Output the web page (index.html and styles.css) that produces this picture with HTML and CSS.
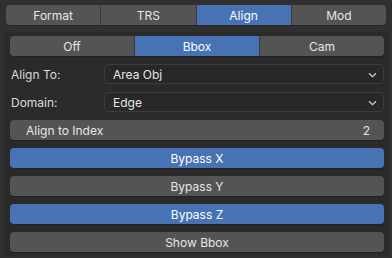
FILE: index.html
```html
<!DOCTYPE html>
<html lang="en">
<head>
    <meta charset="UTF-8">
    <title>Align Panel</title>
    <link rel="stylesheet" href="styles.css">
</head>
<body>
    <div class="tabs">
        <div class="tab">Format</div>
        <div class="tab">TRS</div>
        <div class="tab active">Align</div>
        <div class="tab">Mod</div>
    </div>
    <div class="panel">
        <div class="seg">
            <div class="seg-item">Off</div>
            <div class="seg-item active">Bbox</div>
            <div class="seg-item">Cam</div>
        </div>
        <div class="field">
            <label>Align To:</label>
            <div class="select">
                <span>Area Obj</span>
                <svg class="chev" width="9" height="6" viewBox="0 0 9 6"><path d="M1 1.2 L4.5 4.6 L8 1.2" fill="none" stroke="#cfcfcf" stroke-width="1.3"/></svg>
            </div>
        </div>
        <div class="field">
            <label>Domain:</label>
            <div class="select">
                <span>Edge</span>
                <svg class="chev" width="9" height="6" viewBox="0 0 9 6"><path d="M1 1.2 L4.5 4.6 L8 1.2" fill="none" stroke="#cfcfcf" stroke-width="1.3"/></svg>
            </div>
        </div>
        <div class="btn number">
            <span>Align to Index</span>
            <span>2</span>
        </div>
        <div class="btn active">Bypass X</div>
        <div class="btn">Bypass Y</div>
        <div class="btn active">Bypass Z</div>
        <div class="btn">Show Bbox</div>
    </div>
</body>
</html>
```
FILE: styles.css
```css
html, body {
    margin: 0;
    padding: 0;
}
body {
    width: 392px;
    height: 258px;
    background: #303030;
    font-family: Inter, "Noto Sans", sans-serif;
    font-size: 12px;
    color: #e6e6e6;
    overflow: hidden;
}
.tabs {
    display: flex;
    margin: 5px 6px 0 6px;
    height: 20px;
}
.tab {
    flex: 1;
    display: flex;
    align-items: center;
    justify-content: center;
    background: #545454;
    border-right: 1px solid #3a3a3a;
    box-shadow: 0 1px 0 #262626;
}
.tab:first-child {
    border-radius: 4px 0 0 4px;
}
.tab:last-child {
    border-radius: 0 4px 4px 0;
    border-right: none;
}
.tab.active {
    background: #4772b3;
    color: #fff;
}
.panel {
    margin: 7px 3px 0 4px;
    padding: 4px 5px 4px 6px;
    background: #2a2a2a;
    border-radius: 4px;
    display: flex;
    flex-direction: column;
    gap: 8px;
}
.seg {
    display: flex;
    height: 20px;
}
.seg-item {
    flex: 1;
    display: flex;
    align-items: center;
    justify-content: center;
    background: #545454;
    border-right: 1px solid #3a3a3a;
    box-shadow: 0 1px 0 #222;
}
.seg-item:first-child {
    border-radius: 4px 0 0 4px;
}
.seg-item:last-child {
    border-radius: 0 4px 4px 0;
    border-right: none;
}
.seg-item.active {
    background: #4772b3;
    color: #fff;
}
.field {
    display: flex;
    align-items: center;
    height: 20px;
}
.field label {
    width: 93px;
    padding-left: 1px;
    color: #dcdcdc;
}
.select {
    flex: 1;
    height: 18px;
    display: flex;
    align-items: center;
    justify-content: space-between;
    padding: 0 6px 0 8px;
    background: #282828;
    border: 1px solid #3c3c3c;
    border-radius: 4px;
}
.chev {
    margin-top: 1px;
}
.btn {
    height: 20px;
    display: flex;
    align-items: center;
    justify-content: center;
    background: #545454;
    border-radius: 4px;
    box-shadow: 0 1px 0 #222;
}
.btn.active {
    background: #4772b3;
    color: #fff;
}
.btn.number {
    justify-content: space-between;
    padding: 0 14px 0 16px;
}
```
